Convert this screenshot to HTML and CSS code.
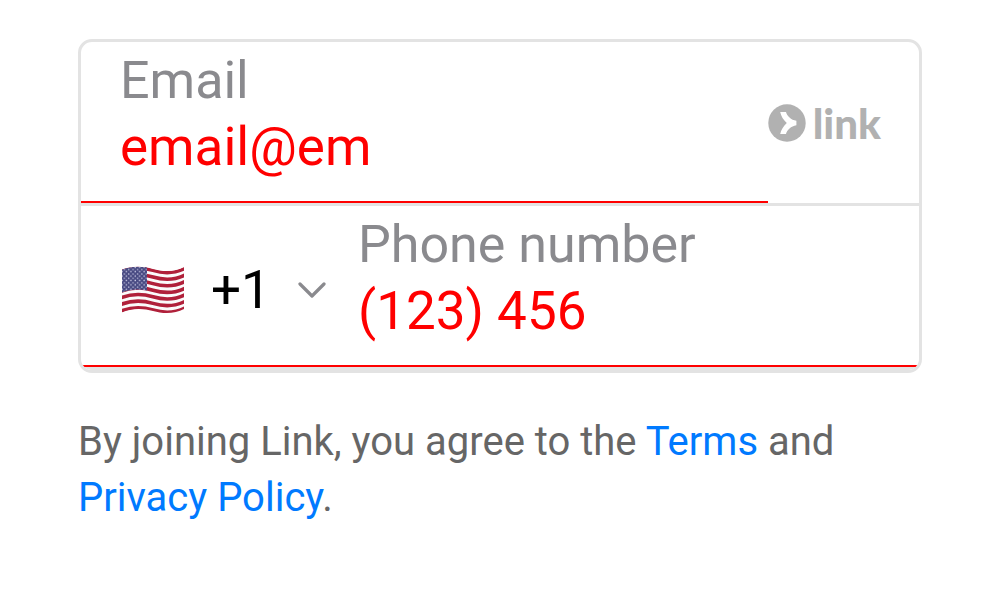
FILE: index.html
```html
<!DOCTYPE html>
<html lang="en">
<head>
<meta charset="utf-8">
<title>Link sign up</title>
<link rel="stylesheet" href="styles.css">
</head>
<body>
<form class="signup">
  <div class="card">
    <div class="row">
      <div class="field field-underlined">
        <label class="field-label" for="email">Email</label>
        <input class="field-input" id="email" type="text" value="email@em">
      </div>
      <div class="brand">
        <svg class="brand-mark" viewBox="0 0 38 38" aria-hidden="true">
          <circle cx="19" cy="19" r="18.7" fill="#b1b1b1"/>
          <path d="M12.2 8H18C19 12 23 16 28.4 16.8V21.2C23 22 19 26 18 30H12.2C13 26 15.4 22 18.8 19C15.4 16 13 12 12.2 8Z" fill="#fff"/>
        </svg>
        <span class="brand-name">link</span>
      </div>
    </div>
    <div class="row row-underlined">
      <div class="country">
        <svg class="flag" viewBox="0 0 64 48" aria-hidden="true">
          <defs>
            <path id="wave" d="M0 4C10 0 22 0 32 3S54 6 64 1"/>
            <pattern id="stars" width="4.4" height="4.4" patternUnits="userSpaceOnUse">
              <circle cx="1.1" cy="1.3" r=".75" fill="#c9c9e4"/>
              <circle cx="3.3" cy="3.5" r=".75" fill="#c9c9e4"/>
            </pattern>
            <clipPath id="cloth"><path d="M1 3.6C10 0 22 0 32 3S54 6 63 1V43C54 48 42 48 32 45S10 42 1 46.6Z"/></clipPath>
          </defs>
          <g clip-path="url(#cloth)">
            <rect width="64" height="48" fill="#fafafa"/>
            <g fill="none" stroke="#b0203a" stroke-width="3.6">
              <use href="#wave" y="1.4"/>
              <use href="#wave" y="8"/>
              <use href="#wave" y="14.6"/>
              <use href="#wave" y="21.2"/>
              <use href="#wave" y="27.8"/>
              <use href="#wave" y="34.4"/>
              <use href="#wave" y="41"/>
            </g>
            <path d="M0 4C9 0 18 0 26 1.3V24.5C18 23 9 23 0 27Z" fill="#484a82"/>
            <path d="M0 4C9 0 18 0 26 1.3V24.5C18 23 9 23 0 27Z" fill="url(#stars)"/>
          </g>
        </svg>
        <select class="country-code" aria-label="Country code">
          <option>+1</option>
        </select>
        <svg class="chevron" viewBox="0 0 28 18" aria-hidden="true">
          <path d="M2 3L14 15L26 3" fill="none" stroke="#8a8a8e" stroke-width="3.2" stroke-linecap="round" stroke-linejoin="round"/>
        </svg>
      </div>
      <div class="field field-phone">
        <label class="field-label" for="phone">Phone number</label>
        <input class="field-input" id="phone" type="tel" value="(123) 456">
      </div>
    </div>
  </div>
  <p class="legal">By joining Link, you agree to the <a href="#terms">Terms</a> and <a href="#privacy">Privacy Policy</a>.</p>
</form>
</body>
</html>
```
FILE: styles.css
```css
* {
  box-sizing: border-box;
}

body {
  margin: 0;
  background: #fff;
  font-family: Roboto, "Liberation Sans", sans-serif;
}

.signup {
  padding: 39px 78px;
}

.card {
  overflow: hidden;
  border: 3px solid #e3e3e3;
  border-radius: 14px;
}

.row {
  display: flex;
  border-bottom: 3px solid #e3e3e3;
}

.row-underlined,
.field-underlined {
  box-shadow: inset 0 -2px #f00;
}

.field {
  flex: 1;
  min-width: 0;
  padding: 6px 0 23px 39px;
}

.field-phone {
  padding-left: 32px;
}

.field-label,
.field-input {
  display: block;
  width: 100%;
  height: 66px;
  line-height: 66px;
}

.field-label {
  color: #8a8a8e;
  font-size: 52px;
}

.field-input {
  padding: 0;
  border: 0;
  outline: 0;
  background: transparent;
  color: #f00;
  font-family: inherit;
  font-size: 53px;
}

.brand {
  display: flex;
  align-items: center;
  gap: 7px;
  padding-right: 38px;
  color: #b1b1b1;
}

.brand-mark {
  width: 38px;
  height: 38px;
}

.brand-name {
  font-family: Lato, sans-serif;
  font-size: 42px;
  font-weight: 900;
  line-height: 48px;
}

.country {
  display: flex;
  align-items: center;
  padding: 6px 0 0 40px;
}

.flag {
  width: 64px;
  height: 48px;
}

.country-code {
  width: 58px;
  height: 66px;
  margin: 0 29px 0 26px;
  padding: 0;
  border: 0;
  outline: 0;
  appearance: none;
  background: transparent;
  color: #000;
  font-family: inherit;
  font-size: 53px;
}

.chevron {
  width: 28px;
  height: 18px;
}

.legal {
  margin: 41px 0 0;
  color: #666;
  font-size: 40px;
  line-height: 56px;
}

.legal a {
  color: #007aff;
  text-decoration: none;
}
```
